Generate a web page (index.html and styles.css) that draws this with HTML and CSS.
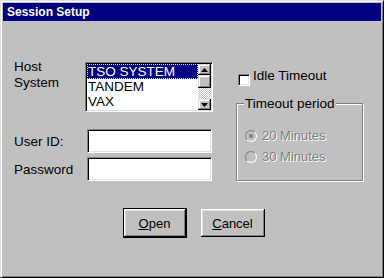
FILE: index.html
```html
<!DOCTYPE html>
<html lang="en">
<head>
    <meta charset="UTF-8">
    <title>Session Setup</title>
    <link rel="stylesheet" href="styles.css">
</head>
<body>
    <div class="window">
        <div class="titlebar">Session Setup</div>

        <div class="main">
            <!-- Host / user fields -->
            <div class="form">
                <label class="label label-host">Host<br>System</label>
                <div class="listbox">
                    <ul class="items">
                        <li class="item selected">TSO SYSTEM</li>
                        <li class="item">TANDEM</li>
                        <li class="item">VAX</li>
                    </ul>
                    <div class="scrollbar">
                        <div class="sb-btn sb-up">
                            <svg width="7" height="4" viewBox="0 0 7 4"><polygon points="3.5,0 7,4 0,4" fill="#000"/></svg>
                        </div>
                        <div class="sb-thumb"></div>
                        <div class="sb-track"></div>
                        <div class="sb-btn sb-down">
                            <svg width="7" height="4" viewBox="0 0 7 4"><polygon points="0,0 7,0 3.5,4" fill="#000"/></svg>
                        </div>
                    </div>
                </div>

                <label class="label row-gap">User ID:</label>
                <div class="textbox row-gap"></div>

                <label class="label">Password</label>
                <div class="textbox"></div>
            </div>

            <!-- Timeout options -->
            <div class="options">
                <div class="check"><span class="check-box"></span>Idle Timeout</div>
                <fieldset class="group">
                    <legend>Timeout period</legend>
                    <div class="radio-row first"><span class="radio checked"></span>20 Minutes</div>
                    <div class="radio-row"><span class="radio"></span>30 Minutes</div>
                </fieldset>
            </div>
        </div>

        <div class="buttons">
            <button class="btn btn-default"><u>O</u>pen</button>
            <button class="btn"><u>C</u>ancel</button>
        </div>
    </div>
</body>
</html>
```

FILE: styles.css
```css
body {
    margin: 0;
    font-family: "Liberation Sans", Arial, sans-serif;
    font-size: 13.5px;
    line-height: 15px;
    color: #000;
    background: #c0c0c0;
}
.window {
    width: 384px;
    height: 278px;
    box-sizing: border-box;
    border: 1px solid;
    border-color: #dfdfdf #000 #000 #dfdfdf;
    box-shadow: inset 1px 1px #fff, inset -1px -1px #808080;
    padding: 2px;
    background: #c0c0c0;
}
.titlebar {
    height: 18px;
    line-height: 18px;
    padding-left: 4px;
    background: #000080;
    color: #fff;
    font-weight: bold;
    font-size: 12px;
}
.main {
    display: flex;
    padding: 41px 0 0 11px;
}
.form {
    display: grid;
    grid-template-columns: 71px 128px;
    row-gap: 4px;
    align-items: center;
}
.label-host {
    align-self: start;
    margin-top: -3px;
    line-height: 16px;
}
.row-gap {
    margin-top: 13px;
}
.listbox {
    height: 50px;
    box-sizing: border-box;
    display: flex;
    border: 1px solid;
    border-color: #808080 #fff #fff #808080;
    box-shadow: inset 1px 1px #000, inset -1px -1px #dfdfdf;
    padding: 1px;
    background: #fff;
}
.items {
    flex: 1;
    list-style: none;
    margin: 0;
    padding: 0;
}
.item {
    height: 15px;
    line-height: 15px;
    padding-left: 1px;
}
.selected {
    background: #000080;
    color: #fff;
    outline: 1px dotted #ffff00;
    outline-offset: -1px;
}
.scrollbar {
    width: 13px;
    display: flex;
    flex-direction: column;
}
.sb-btn, .sb-thumb {
    background: #c0c0c0;
    box-shadow: inset -1px -1px #000, inset 1px 1px #dfdfdf, inset -2px -2px #808080, inset 2px 2px #fff;
}
.sb-btn {
    height: 11px;
    display: flex;
    align-items: center;
    justify-content: center;
}
.sb-thumb {
    height: 13px;
}
.sb-track {
    flex: 1;
    background: repeating-conic-gradient(#c0c0c0 0 25%, #fff 0 50%) 0 0 / 2px 2px;
}
.textbox {
    margin-left: 2px;
    width: 125px;
    height: 24px;
    box-sizing: border-box;
    border: 1px solid;
    border-color: #808080 #fff #fff #808080;
    box-shadow: inset 1px 1px #000, inset -1px -1px #dfdfdf;
    background: #fff;
}
.options {
    margin-left: 23px;
}
.check {
    display: flex;
    align-items: flex-start;
    height: 15px;
    margin-top: 6px;
    padding-left: 2px;
}
.check-box {
    width: 12px;
    height: 12px;
    margin: 6px 3px 0 0;
    box-sizing: border-box;
    border: 1px solid;
    border-color: #808080 #fff #fff #808080;
    box-shadow: inset 1px 1px #000, inset -1px -1px #dfdfdf;
    background: #fff;
}
.group {
    margin: 13px 0 0 0;
    padding: 0;
    width: 127px;
    height: 85px;
    box-sizing: border-box;
    border: 1px solid #808080;
    box-shadow: inset 1px 1px #fff, 1px 1px #fff;
}
.group legend {
    margin-left: 7px;
    padding: 0 1px;
    background: #c0c0c0;
}
.radio-row {
    display: flex;
    align-items: center;
    padding-left: 8px;
    margin-top: 6px;
    font-size: 13px;
    color: #808080;
    text-shadow: 1px 1px #fff;
}
.radio-row.first {
    margin-top: 17px;
}
.radio {
    position: relative;
    width: 12px;
    height: 12px;
    box-sizing: border-box;
    margin-right: 5px;
    border-radius: 50%;
    border: 1px solid;
    border-color: #808080 #fff #fff #808080;
    background: #c0c0c0;
}
.radio.checked::after {
    content: "";
    position: absolute;
    left: 3px;
    top: 3px;
    width: 4px;
    height: 4px;
    border-radius: 50%;
    background: #808080;
}
.buttons {
    display: flex;
    justify-content: center;
    align-items: center;
    gap: 14px;
    margin-top: 27px;
    padding-left: 3px;
}
.btn {
    width: 64px;
    height: 28px;
    box-sizing: border-box;
    font-family: inherit;
    font-size: 13px;
    color: #000;
    background: #c0c0c0;
    border: none;
    padding: 0;
    box-shadow: inset -1px -1px #000, inset 1px 1px #fff, inset -2px -2px #808080, inset 2px 2px #dfdfdf;
}
.btn-default {
    height: 30px;
    border: 1px solid #000;
}
```
